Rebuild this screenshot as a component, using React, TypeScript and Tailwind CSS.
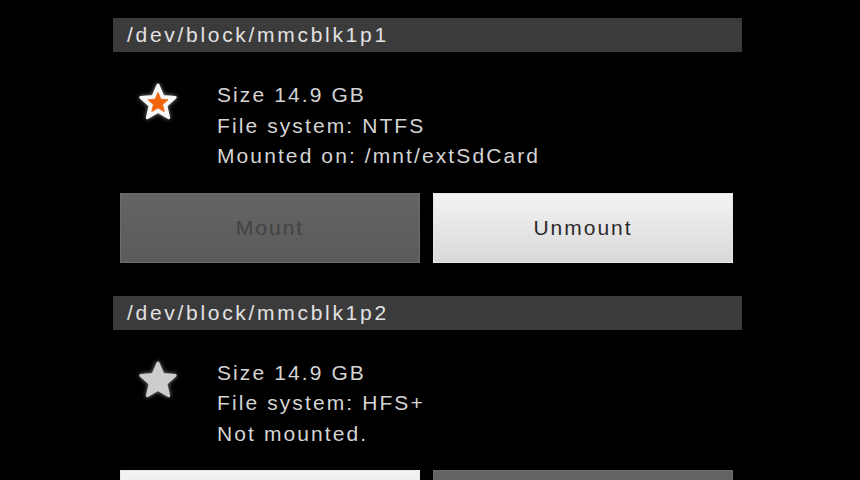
const partitions = [
  {
    device: "/dev/block/mmcblk1p1",
    lines: ["Size 14.9 GB", "File system: NTFS", "Mounted on: /mnt/extSdCard"],
    mounted: true,
  },
  {
    device: "/dev/block/mmcblk1p2",
    lines: ["Size 14.9 GB", "File system: HFS+", "Not mounted."],
    mounted: false,
  },
];

const STAR = "M12 2.2l2.85 6.55 7.05.65-5.35 4.7 1.6 6.95L12 17.4l-6.15 3.65 1.6-6.95L2.1 9.4l7.05-.65z";

function StarIcon({ active }: { active: boolean }) {
  return (
    <svg
      viewBox="0 0 24 24"
      className="w-[42px] h-[42px] drop-shadow-[0_0_2px_rgba(255,255,255,0.55)]"
    >
      <path
        d={STAR}
        fill={active ? "#f8f8f8" : "#cdcdcd"}
        stroke={active ? "#f8f8f8" : "#cdcdcd"}
        strokeWidth={1.6}
        strokeLinejoin="round"
      />
      {active && (
        <path
          d={STAR}
          fill="#f0650c"
          stroke="#f0650c"
          strokeWidth={0.8}
          strokeLinejoin="round"
          transform="translate(12 12.6) scale(0.58) translate(-12 -12.6)"
        />
      )}
    </svg>
  );
}

function PanelButton({ label, enabled }: { label: string; enabled: boolean }) {
  return (
    <button
      type="button"
      disabled={!enabled}
      className={
        enabled
          ? "h-[70px] border border-[#e6e6e6] bg-gradient-to-b from-[#f3f3f3] to-[#d9d9d9] text-[21px] tracking-[2px] text-[#2b2b2b]"
          : "h-[70px] border border-[#6c6c6c] bg-gradient-to-b from-[#646464] to-[#5b5b5b] text-[21px] tracking-[2px] text-[#434343]"
      }
    >
      {label}
    </button>
  );
}

export default function App() {
  return (
    <div className="h-[480px] overflow-hidden bg-black pt-[18px] font-['Liberation_Sans',Arial,sans-serif] antialiased">
      <div className="ml-[113px] flex w-[629px] flex-col">
        {partitions.map((p) => (
          <section key={p.device} className="mb-[33px] flex flex-col">
            <div className="h-[34px] bg-[#3b3b3b] pl-[14px] text-[21px] leading-[34px] tracking-[2.7px] text-[#e2e2e2]">
              {p.device}
            </div>
            <div className="flex pt-[28px]">
              <div className="ml-[24px] mt-[1px] w-[42px]">
                <StarIcon active={p.mounted} />
              </div>
              <div className="ml-[38px] flex flex-col text-[21px] leading-[30.5px] tracking-[2.1px] text-[#d4d4d4]">
                {p.lines.map((l) => (
                  <span key={l}>{l}</span>
                ))}
              </div>
            </div>
            <div className="mt-[21px] grid grid-cols-2 gap-[13px] pl-[7px] pr-[9px]">
              <PanelButton label="Mount" enabled={!p.mounted} />
              <PanelButton label="Unmount" enabled={p.mounted} />
            </div>
          </section>
        ))}
      </div>
    </div>
  );
}
